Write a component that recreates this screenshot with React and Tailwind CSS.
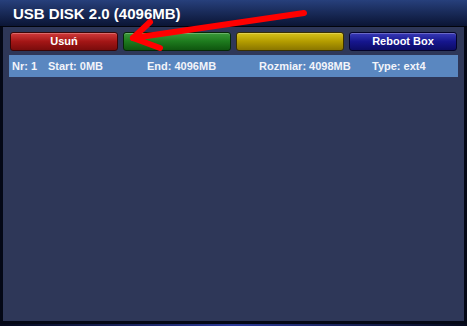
import React from 'react';

const BUTTONS = [
    { label: 'Usuń', cls: 'bg-gradient-to-b from-[#d23a3a] via-[#a31616] to-[#7a0c0c] border-[#3a0606]' },
    { label: '', cls: 'bg-gradient-to-b from-[#3a9a3a] via-[#1d7a1d] to-[#0f560f] border-[#062806]' },
    { label: '', cls: 'bg-gradient-to-b from-[#d8c21a] via-[#b39c00] to-[#8a7600] border-[#3a3000]' },
    { label: 'Reboot Box', cls: 'bg-gradient-to-b from-[#3a3ab8] via-[#16168e] to-[#0c0c66] border-[#04042a]' },
];

const ROW = [
    { text: 'Nr: 1', x: 'w-[36px]' },
    { text: 'Start: 0MB', x: 'w-[99px]' },
    { text: 'End: 4096MB', x: 'w-[112px]' },
    { text: 'Rozmiar: 4098MB', x: 'w-[113px]' },
    { text: 'Type: ext4', x: '' },
];

export default function App() {
    return (
        <div className="relative w-[467px] h-[326px] bg-[#040816] overflow-hidden" style={{ fontFamily: '"Liberation Sans", Arial, sans-serif' }}>
            {/* title bar */}
            <div className="h-[27px] bg-gradient-to-b from-[#27407c] to-[#0b1535] border-b border-[#02040c] flex items-center pl-[13px]">
                <span className="text-white font-bold text-[15px] leading-none">USB DISK 2.0 (4096MB)</span>
            </div>

            {/* body */}
            <div className="ml-[3px] mr-[3px] h-[294px] bg-[#2e3758] pt-[5px] px-[6px]">
                <div className="flex gap-[5px] h-[19px] pl-[1px] pr-[1px]">
                    {BUTTONS.map((b, i) => (
                        <div key={i} className={`flex-1 rounded-[3px] border flex items-center justify-center shadow-[inset_0_1px_0_rgba(255,255,255,0.25)] ${b.cls}`}>
                            <span className="text-white font-bold text-[11px] leading-none">{b.label}</span>
                        </div>
                    ))}
                </div>
                <div className="mt-[4px] h-[22px] bg-[#5a87c0] flex items-center pl-[3px]">
                    {ROW.map((r, i) => (
                        <span key={i} className={`text-[#f2f4fa] font-bold text-[11px] leading-none ${r.x}`}>{r.text}</span>
                    ))}
                </div>
            </div>

            {/* bottom band */}
            <div className="absolute left-0 right-0 bottom-0 h-[2px] bg-gradient-to-r from-[#060a1e] via-[#2a3a9a] to-[#060a1e]" />

            {/* red arrow overlay */}
            <svg className="absolute left-0 top-0" width="467" height="326" viewBox="0 0 467 326">
                <g stroke="#ff0000" strokeWidth="6" strokeLinecap="round" fill="none">
                    <line x1="304" y1="13" x2="133" y2="38" />
                    <line x1="133" y1="38" x2="150" y2="22" />
                    <line x1="133" y1="38" x2="160" y2="48" />
                </g>
            </svg>
        </div>
    );
}
